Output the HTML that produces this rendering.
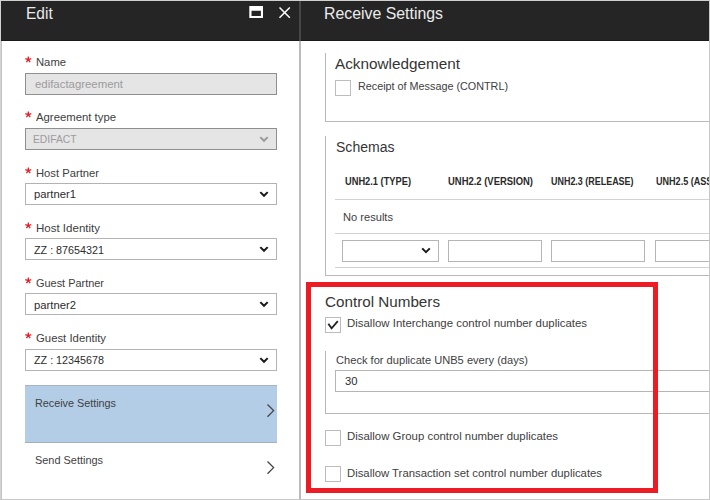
<!DOCTYPE html>
<html><head><meta charset="utf-8"><style>
html,body{margin:0;padding:0;}
body{width:710px;height:500px;position:relative;overflow:hidden;background:#fff;font-family:"Liberation Sans",sans-serif;}
.t{position:absolute;white-space:nowrap;line-height:30px;}
</style></head><body>
<div style="position:absolute;left:1px;top:1px;width:708px;height:39px;background:#252525"></div>
<div style="position:absolute;left:1px;top:40px;width:708px;height:1px;background:#1a1a1a"></div>
<div style="position:absolute;left:299px;top:1px;width:2px;height:40px;background:#474747"></div>
<div style="position:absolute;left:299px;top:41px;width:2px;height:458px;background:#bcbcbc"></div>
<div class="t" style="left:25.80px;top:-1px;font-size:17px;color:#ebebeb;transform:scale(0.9114,1.0);transform-origin:0.00px 20px;">Edit</div>
<svg style="position:absolute;left:248px;top:5px" width="16" height="14" viewBox="0 0 16 14"><path fill-rule="evenodd" fill="#fff" d="M1.3 1.1 H15 V12.9 H1.3 Z M3.5 5.7 V11 H12.9 V5.7 Z"/></svg>
<svg style="position:absolute;left:276px;top:4px" width="18" height="18" viewBox="0 0 18 18"><path d="M3.5 3.5 L13.8 13.8 M13.8 3.5 L3.5 13.8" stroke="#fff" stroke-width="1.5"/></svg>
<svg style="position:absolute;left:24px;top:56px" width="9" height="8" viewBox="0 0 9 8"><path d="M4.3 3.6 V0.4 M4.3 3.6 L7.3 2.6 M4.3 3.6 L1.3 2.6 M4.3 3.6 L6.2 6.2 M4.3 3.6 L2.4 6.2" stroke="#ed1c24" stroke-width="1.3" stroke-linecap="butt"/></svg>
<div class="t" style="left:36.20px;top:47px;font-size:11.5px;color:#404040;transform:scale(0.9781,1.0);transform-origin:0.00px 19px;">Name</div>
<div style="position:absolute;left:25px;top:73px;width:252px;height:22px;box-sizing:border-box;background:#e5e5e5;border:1px solid #8f8f8f"></div>
<div class="t" style="left:34.60px;top:69px;font-size:11.5px;color:#9c9c9c;transform:scale(0.9903,1.0);transform-origin:0.00px 19px;">edifactagreement</div>
<svg style="position:absolute;left:24px;top:111px" width="9" height="8" viewBox="0 0 9 8"><path d="M4.3 3.6 V0.4 M4.3 3.6 L7.3 2.6 M4.3 3.6 L1.3 2.6 M4.3 3.6 L6.2 6.2 M4.3 3.6 L2.4 6.2" stroke="#ed1c24" stroke-width="1.3" stroke-linecap="butt"/></svg>
<div class="t" style="left:36.20px;top:102px;font-size:11.5px;color:#404040;transform:scale(0.9854,1.0);transform-origin:0.00px 19px;">Agreement type</div>
<div style="position:absolute;left:25px;top:128px;width:252px;height:22px;box-sizing:border-box;background:#e5e5e5;border:1px solid #8f8f8f"></div>
<div class="t" style="left:32.80px;top:124px;font-size:11.5px;color:#9c9c9c;transform:scale(0.8958,1.0);transform-origin:0.00px 19px;">EDIFACT</div>
<svg style="position:absolute;left:258px;top:134px" width="12" height="10" viewBox="0 0 12 10"><path d="M2.3 3.1 L6 6.8 L9.7 3.1" fill="none" stroke="#9a9a9a" stroke-width="2"/></svg>
<svg style="position:absolute;left:24px;top:167px" width="9" height="8" viewBox="0 0 9 8"><path d="M4.3 3.6 V0.4 M4.3 3.6 L7.3 2.6 M4.3 3.6 L1.3 2.6 M4.3 3.6 L6.2 6.2 M4.3 3.6 L2.4 6.2" stroke="#ed1c24" stroke-width="1.3" stroke-linecap="butt"/></svg>
<div class="t" style="left:36.20px;top:158px;font-size:11.5px;color:#404040;transform:scale(0.9760,1.0);transform-origin:0.00px 19px;">Host Partner</div>
<div style="position:absolute;left:25px;top:183px;width:252px;height:22px;box-sizing:border-box;background:#fff;border:1px solid #b3b3b3"></div>
<div class="t" style="left:34.30px;top:179px;font-size:11.5px;color:#2c2c2c;transform:scale(0.9807,1.0);transform-origin:0.00px 19px;">partner1</div>
<svg style="position:absolute;left:258px;top:189px" width="12" height="10" viewBox="0 0 12 10"><path d="M2.3 3.1 L6 6.8 L9.7 3.1" fill="none" stroke="#1a1a1a" stroke-width="2"/></svg>
<svg style="position:absolute;left:24px;top:222px" width="9" height="8" viewBox="0 0 9 8"><path d="M4.3 3.6 V0.4 M4.3 3.6 L7.3 2.6 M4.3 3.6 L1.3 2.6 M4.3 3.6 L6.2 6.2 M4.3 3.6 L2.4 6.2" stroke="#ed1c24" stroke-width="1.3" stroke-linecap="butt"/></svg>
<div class="t" style="left:36.20px;top:213px;font-size:11.5px;color:#404040;transform:scale(1.0012,1.0);transform-origin:0.00px 19px;">Host Identity</div>
<div style="position:absolute;left:25px;top:238px;width:252px;height:22px;box-sizing:border-box;background:#fff;border:1px solid #b3b3b3"></div>
<div class="t" style="left:34.30px;top:235px;font-size:11.5px;color:#2c2c2c;transform:scale(0.9359,1.0);transform-origin:0.00px 19px;">ZZ : 87654321</div>
<svg style="position:absolute;left:258px;top:244px" width="12" height="10" viewBox="0 0 12 10"><path d="M2.3 3.1 L6 6.8 L9.7 3.1" fill="none" stroke="#1a1a1a" stroke-width="2"/></svg>
<svg style="position:absolute;left:24px;top:277px" width="9" height="8" viewBox="0 0 9 8"><path d="M4.3 3.6 V0.4 M4.3 3.6 L7.3 2.6 M4.3 3.6 L1.3 2.6 M4.3 3.6 L6.2 6.2 M4.3 3.6 L2.4 6.2" stroke="#ed1c24" stroke-width="1.3" stroke-linecap="butt"/></svg>
<div class="t" style="left:36.20px;top:268px;font-size:11.5px;color:#404040;transform:scale(0.9498,1.0);transform-origin:0.00px 19px;">Guest Partner</div>
<div style="position:absolute;left:25px;top:293px;width:252px;height:22px;box-sizing:border-box;background:#fff;border:1px solid #b3b3b3"></div>
<div class="t" style="left:34.30px;top:290px;font-size:11.5px;color:#2c2c2c;transform:scale(0.9807,1.0);transform-origin:0.00px 19px;">partner2</div>
<svg style="position:absolute;left:258px;top:299px" width="12" height="10" viewBox="0 0 12 10"><path d="M2.3 3.1 L6 6.8 L9.7 3.1" fill="none" stroke="#1a1a1a" stroke-width="2"/></svg>
<svg style="position:absolute;left:24px;top:332px" width="9" height="8" viewBox="0 0 9 8"><path d="M4.3 3.6 V0.4 M4.3 3.6 L7.3 2.6 M4.3 3.6 L1.3 2.6 M4.3 3.6 L6.2 6.2 M4.3 3.6 L2.4 6.2" stroke="#ed1c24" stroke-width="1.3" stroke-linecap="butt"/></svg>
<div class="t" style="left:36.20px;top:323px;font-size:11.5px;color:#404040;transform:scale(0.9866,1.0);transform-origin:0.00px 19px;">Guest Identity</div>
<div style="position:absolute;left:25px;top:349px;width:252px;height:22px;box-sizing:border-box;background:#fff;border:1px solid #b3b3b3"></div>
<div class="t" style="left:34.30px;top:345px;font-size:11.5px;color:#2c2c2c;transform:scale(0.9359,1.0);transform-origin:0.00px 19px;">ZZ : 12345678</div>
<svg style="position:absolute;left:258px;top:355px" width="12" height="10" viewBox="0 0 12 10"><path d="M2.3 3.1 L6 6.8 L9.7 3.1" fill="none" stroke="#1a1a1a" stroke-width="2"/></svg>
<div style="position:absolute;left:25px;top:385px;width:252px;height:58px;box-sizing:border-box;background:#b3cde6;border-top:1px solid #a9b4c0;border-bottom:1px solid #a9aeb3"></div>
<div class="t" style="left:35.40px;top:388px;font-size:11.5px;color:#3f3f3f;transform:scale(0.9386,1.0);transform-origin:0.00px 19px;">Receive Settings</div>
<svg style="position:absolute;left:264px;top:402px" width="14" height="18" viewBox="0 0 14 18"><path d="M3.5 2.5 L9.6 8.6 L3.5 14.7" fill="none" stroke="#444" stroke-width="1.3"/></svg>
<div class="t" style="left:35.40px;top:445px;font-size:11.5px;color:#3f3f3f;transform:scale(0.9496,1.0);transform-origin:0.00px 19px;">Send Settings</div>
<svg style="position:absolute;left:264px;top:459px" width="14" height="18" viewBox="0 0 14 18"><path d="M3.5 2.5 L9.6 8.6 L3.5 14.7" fill="none" stroke="#444" stroke-width="1.3"/></svg>
<div class="t" style="left:324.00px;top:-1px;font-size:17px;color:#ebebeb;transform:scale(0.9329,1.0);transform-origin:0.00px 20px;">Receive Settings</div>
<div style="position:absolute;left:325px;top:53px;width:1px;height:69px;background:#b8b8b8"></div>
<div style="position:absolute;left:325px;top:121px;width:384px;height:1px;background:#b8b8b8"></div>
<div class="t" style="left:335.00px;top:49px;font-size:15.5px;color:#353535;transform:scale(0.9869,1.0);transform-origin:0.00px 20px;">Acknowledgement</div>
<div style="position:absolute;left:335px;top:80px;width:16px;height:16px;box-sizing:border-box;border:1px solid #bcbcbc;background:#fff"></div>
<div class="t" style="left:357.60px;top:71px;font-size:11.5px;color:#404040;transform:scale(0.9389,1.0);transform-origin:0.00px 19px;">Receipt of Message (CONTRL)</div>
<div style="position:absolute;left:325px;top:136px;width:1px;height:140px;background:#b8b8b8"></div>
<div style="position:absolute;left:325px;top:275px;width:384px;height:1px;background:#b8b8b8"></div>
<div class="t" style="left:335.70px;top:132px;font-size:15.5px;color:#353535;transform:scale(0.9054,1.0);transform-origin:0.00px 20px;">Schemas</div>
<div class="t" style="left:344.60px;top:166px;font-size:10.5px;color:#2a2a2a;transform:scale(0.8839,1.0);transform-origin:0.00px 19px;font-weight:bold;">UNH2.1 (TYPE)</div>
<div class="t" style="left:448.40px;top:166px;font-size:10.5px;color:#2a2a2a;transform:scale(0.8993,1.0);transform-origin:0.00px 19px;font-weight:bold;">UNH2.2 (VERSION)</div>
<div class="t" style="left:551.40px;top:166px;font-size:10.5px;color:#2a2a2a;transform:scale(0.8519,1.0);transform-origin:0.00px 19px;font-weight:bold;">UNH2.3 (RELEASE)</div>
<div class="t" style="left:655.60px;top:166px;font-size:10.5px;color:#2a2a2a;transform:scale(0.8620,1.0);transform-origin:0.00px 19px;font-weight:bold;">UNH2.5 (ASSIGNED)</div>
<div style="position:absolute;left:335px;top:199px;width:374px;height:1px;background:#d2d2d2"></div>
<div class="t" style="left:342.50px;top:202px;font-size:11.5px;color:#404040;transform:scale(0.9659,1.0);transform-origin:0.00px 19px;">No results</div>
<div style="position:absolute;left:335px;top:233px;width:374px;height:1px;background:#d2d2d2"></div>
<div style="position:absolute;left:342px;top:240px;width:97px;height:22px;box-sizing:border-box;border:1px solid #b5b5b5;background:#fff"></div>
<div style="position:absolute;left:448px;top:240px;width:94px;height:22px;box-sizing:border-box;border:1px solid #b5b5b5;background:#fff"></div>
<div style="position:absolute;left:551px;top:240px;width:94px;height:22px;box-sizing:border-box;border:1px solid #b5b5b5;background:#fff"></div>
<div style="position:absolute;left:655px;top:240px;width:66px;height:22px;box-sizing:border-box;border:1px solid #b5b5b5;background:#fff"></div>
<svg style="position:absolute;left:419px;top:246px" width="14" height="10" viewBox="0 0 14 10"><path d="M3.2 2.4 L7 6.2 L10.8 2.4" fill="none" stroke="#1a1a1a" stroke-width="2"/></svg>
<div style="position:absolute;left:335px;top:267px;width:374px;height:1px;background:#d2d2d2"></div>
<div class="t" style="left:325.40px;top:287px;font-size:15.5px;color:#353535;transform:scale(0.9816,1.0);transform-origin:0.00px 20px;">Control Numbers</div>
<div style="position:absolute;left:325px;top:317px;width:16px;height:16px;box-sizing:border-box;border:1px solid #bcbcbc;background:#fff"></div>
<svg style="position:absolute;left:325px;top:317px" width="16" height="16" viewBox="0 0 16 16"><path d="M3.3 6.8 L6.6 11.3 L12.8 4.2" fill="none" stroke="#222" stroke-width="1.8"/></svg>
<div class="t" style="left:346.80px;top:308px;font-size:11.5px;color:#404040;transform:scale(0.9933,1.0);transform-origin:0.00px 19px;">Disallow Interchange control number duplicates</div>
<div style="position:absolute;left:325px;top:351px;width:1px;height:63px;background:#b8b8b8"></div>
<div style="position:absolute;left:325px;top:413px;width:384px;height:1px;background:#b8b8b8"></div>
<div class="t" style="left:335.60px;top:345px;font-size:11.5px;color:#404040;transform:scale(0.9659,1.0);transform-origin:0.00px 19px;">Check for duplicate UNB5 every (days)</div>
<div style="position:absolute;left:335px;top:370px;width:386px;height:22px;box-sizing:border-box;border:1px solid #b5b5b5;background:#fff"></div>
<div class="t" style="left:344.80px;top:366px;font-size:11.5px;color:#2c2c2c;transform:scale(0.9768,1.0);transform-origin:0.00px 19px;">30</div>
<div style="position:absolute;left:325px;top:430px;width:16px;height:16px;box-sizing:border-box;border:1px solid #bcbcbc;background:#fff"></div>
<div class="t" style="left:346.80px;top:421px;font-size:11.5px;color:#404040;transform:scale(0.9913,1.0);transform-origin:0.00px 19px;">Disallow Group control number duplicates</div>
<div style="position:absolute;left:325px;top:466px;width:16px;height:16px;box-sizing:border-box;border:1px solid #bcbcbc;background:#fff"></div>
<div class="t" style="left:346.80px;top:458px;font-size:11.5px;color:#404040;transform:scale(0.9850,1.0);transform-origin:0.00px 19px;">Disallow Transaction set control number duplicates</div>
<div style="position:absolute;left:306px;top:282px;width:342px;height:201px;border:5px solid #ed1c24;"></div>
<div style="position:absolute;left:0px;top:0px;width:710px;height:1px;background:#d0d0d0"></div>
<div style="position:absolute;left:0px;top:0px;width:1px;height:500px;background:#d2d2d2"></div>
<div style="position:absolute;left:1px;top:41px;width:1px;height:459px;background:#c4c4c4"></div>
<div style="position:absolute;left:709px;top:0px;width:1px;height:500px;background:#c8c8c8"></div>
<div style="position:absolute;left:0px;top:499px;width:710px;height:1px;background:#c8c8c8"></div>
</body></html>
